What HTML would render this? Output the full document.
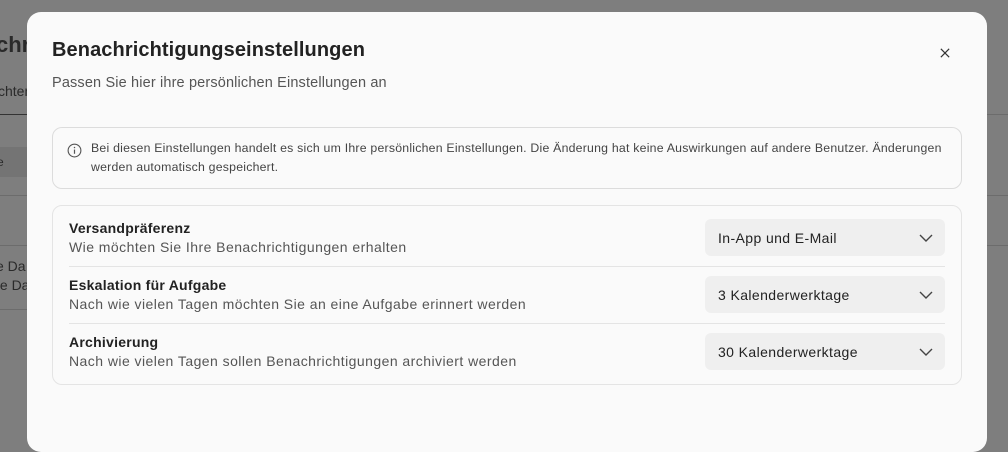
<!DOCTYPE html>
<html><head><meta charset="utf-8"><style>
*{box-sizing:border-box;margin:0;padding:0}
body{width:1008px;height:429px;overflow:hidden;background:#7e7e7e;font-family:"Liberation Sans",sans-serif;position:relative;color:#1c1c1c}
.bg{position:absolute;color:#2a2a2a}
.line{position:absolute;height:1px;background:#6c6c6c}
.modal{position:absolute;left:27px;top:12px;width:960px;height:440px;background:#fafafa;border-radius:14px}
.t{position:absolute;left:25px;top:27px;font-size:20px;font-weight:bold;color:#222;letter-spacing:0.1px}
.st{position:absolute;left:25px;top:63px;font-size:14.5px;color:#555;letter-spacing:0.15px}
.x{position:absolute;left:912px;top:35px}
.info{position:absolute;left:25px;top:115px;width:910px;height:62px;border:1px solid #dcdcdc;border-radius:10px;font-size:12.3px;color:#444;line-height:19px;padding:11px 10px 0 38px;letter-spacing:0.22px}
.info svg{position:absolute;left:14px;top:15px}
.box{position:absolute;left:25px;top:193px;width:910px;height:180px;border:1px solid #e4e4e4;border-radius:10px}
.row{position:absolute;left:16px;width:876px;height:57px}
.row .h{position:absolute;left:0;top:14px;font-size:14px;font-weight:bold;color:#222;letter-spacing:0.25px}
.row .d{position:absolute;left:0;top:33px;font-size:14px;color:#555;letter-spacing:0.45px}
.sel{position:absolute;left:636px;top:13px;width:240px;height:37px;background:#efefef;border-radius:6px;font-size:14px;color:#222;padding:11px 0 0 13px;letter-spacing:0.4px}
.sel svg{position:absolute;right:12px;top:15px}
.sep{position:absolute;left:16px;width:876px;height:1px;background:#e4e4e4}
</style></head><body>
<div class="bg" style="left:-4px;top:32px;font-size:22px;font-weight:bold">chr</div>
<div class="bg" style="left:-2px;top:83px;font-size:14px">chten</div>
<div class="line" style="left:0;top:114px;width:30px;background:#333"></div>
<div class="line" style="left:986px;top:114px;width:22px"></div>
<div style="position:absolute;left:0;top:147px;width:30px;height:30px;background:#747474"></div>
<div class="bg" style="left:-3px;top:155px;font-size:12px">e</div>
<div class="line" style="left:0;top:195px;width:1008px"></div>
<div class="line" style="left:0;top:245px;width:1008px"></div>
<div class="bg" style="left:-4px;top:258px;font-size:14px">e Da</div>
<div class="bg" style="left:-4px;top:277px;font-size:14px">te Da</div>
<div class="line" style="left:0;top:309px;width:30px"></div>
<div class="modal">
<div class="t">Benachrichtigungseinstellungen</div>
<div class="st">Passen Sie hier ihre persönlichen Einstellungen an</div>
<svg class="x" width="12" height="12" viewBox="0 0 13 13"><path d="M2 2L11 11M11 2L2 11" stroke="#333" stroke-width="1.3"/></svg>
<div class="info"><svg width="15" height="15" viewBox="0 0 16 16"><circle cx="8" cy="8" r="6.8" fill="none" stroke="#555" stroke-width="1.2"/><path d="M8 7v4.5" stroke="#555" stroke-width="1.3"/><circle cx="8" cy="4.8" r=".8" fill="#555"/></svg>Bei diesen Einstellungen handelt es sich um Ihre persönlichen Einstellungen. Die Änderung hat keine Auswirkungen auf andere Benutzer. Änderungen<br>werden automatisch gespeichert.</div>
<div class="box">
<div class="row" style="top:0"><div class="h">Versandpräferenz</div><div class="d">Wie möchten Sie Ihre Benachrichtigungen erhalten</div><div class="sel">In-App und E-Mail<svg width="14" height="8" viewBox="0 0 14 8"><path d="M1 1l6 6 6-6" fill="none" stroke="#444" stroke-width="1.4"/></svg></div></div>
<div class="sep" style="top:60px"></div>
<div class="row" style="top:57px"><div class="h">Eskalation für Aufgabe</div><div class="d">Nach wie vielen Tagen möchten Sie an eine Aufgabe erinnert werden</div><div class="sel">3 Kalenderwerktage<svg width="14" height="8" viewBox="0 0 14 8"><path d="M1 1l6 6 6-6" fill="none" stroke="#444" stroke-width="1.4"/></svg></div></div>
<div class="sep" style="top:117px"></div>
<div class="row" style="top:114px"><div class="h">Archivierung</div><div class="d">Nach wie vielen Tagen sollen Benachrichtigungen archiviert werden</div><div class="sel">30 Kalenderwerktage<svg width="14" height="8" viewBox="0 0 14 8"><path d="M1 1l6 6 6-6" fill="none" stroke="#444" stroke-width="1.4"/></svg></div></div>
</div>
</div>
</body></html>
